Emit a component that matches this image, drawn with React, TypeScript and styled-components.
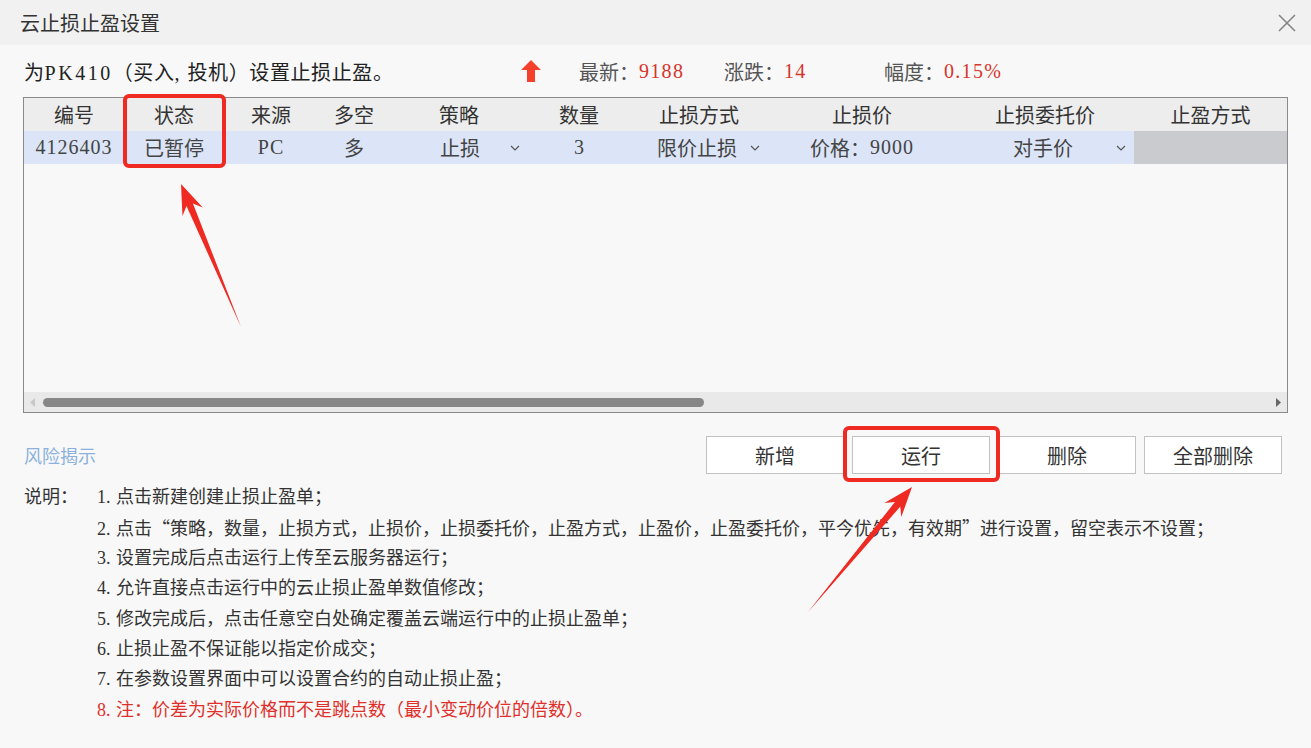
import React from 'react';
import styled, { createGlobalStyle } from 'styled-components';

const GlobalStyle = createGlobalStyle`
  html, body {
    margin: 0;
    padding: 0;
    background: #f8f8f8;
  }
  body {
    font-family: "Liberation Serif", "Noto Sans CJK SC", serif;
    color: #333;
  }
`;

const Window = styled.div`
  position: relative;
  width: 1311px;
  height: 748px;
  overflow: hidden;
  background: #f8f8f8;
`;

const TitleBar = styled.div`
  height: 45px;
  display: flex;
  align-items: center;
  justify-content: space-between;
  padding: 0 12px 0 20px;
  background: #f1f1f1;
  font-size: 20px;
  color: #333;
`;

const CloseButton = styled.div`
  width: 24px;
  height: 24px;
  display: flex;
  align-items: center;
  justify-content: center;
`;

const InfoRow = styled.div`
  height: 52px;
  display: flex;
  align-items: center;
  padding-left: 24px;
  font-size: 20px;
`;

const InfoText = styled.div`
  width: 497px;
  color: #222;
  letter-spacing: 0.6px;
`;

// half-width latin in the original font runs wider than Liberation Serif
const Num = styled.span<{ $sp?: number }>`
  letter-spacing: ${p => p.$sp ?? 1}px;
`;

const Wide = styled.span`
  font-family: "Noto Sans CJK SC", sans-serif;
`;

const UpArrow = styled.div`
  width: 20px;
  height: 24px;
  margin-right: 38px;
  display: flex;
  align-items: center;
`;

const Stat = styled.div<{ $w: number }>`
  width: ${p => p.$w}px;
  display: flex;
  align-items: center;
`;

const StatLabel = styled.span`
  color: #555;
`;

const StatValue = styled.span`
  color: #d6352c;
  letter-spacing: 1.3px;
`;

const TableBox = styled.div`
  margin: 0 23px;
  height: 316px;
  box-sizing: border-box;
  border: 1px solid #8a8a8a;
  display: flex;
  flex-direction: column;
  background: #f8f8f8;
`;

const Row = styled.div<{ $head?: boolean }>`
  display: grid;
  grid-template-columns: 100px 100px 94px 72px 138px 102px 138px 188px 178px 1fr;
  height: 33px;
  background: ${p => (p.$head ? '#ededed' : '#dbe5f7')};
  font-size: 20px;
  color: ${p => (p.$head ? '#333' : '#444')};
`;

const Cell = styled.div<{ $fill?: boolean }>`
  display: flex;
  align-items: center;
  justify-content: center;
  white-space: nowrap;
  background: ${p => (p.$fill ? '#c9cbce' : 'transparent')};
`;

const SelectCell = styled.div<{ $pad: number }>`
  display: flex;
  align-items: center;
  padding-left: ${p => p.$pad}px;
  padding-right: 8px;
  white-space: nowrap;
`;

const Chevron = styled.span`
  margin-left: auto;
  display: flex;
  align-items: center;
`;

const TableBody = styled.div`
  flex: 1;
`;

const HScroll = styled.div`
  height: 20px;
  background: #e9e9e9;
  display: flex;
  align-items: center;
  padding: 0 6px;
  gap: 8px;
`;

const ScrollTrack = styled.div`
  flex: 1;
  height: 9px;
`;

const ScrollThumb = styled.div`
  width: 661px;
  height: 9px;
  border-radius: 5px;
  background: #878787;
`;

const ActionsRow = styled.div`
  margin: 23px 29px 0 24px;
  height: 38px;
  display: flex;
  align-items: center;
  justify-content: space-between;
`;

const RiskLink = styled.span`
  font-size: 18px;
  color: #8ab2dc;
`;

const Buttons = styled.div`
  display: flex;
  gap: 8px;
`;

const Button = styled.button`
  width: 138px;
  height: 38px;
  border: 1px solid #c2c2c2;
  background: #fff;
  font-family: inherit;
  font-size: 20px;
  color: #333;
  padding: 0;
`;

const Notes = styled.div`
  margin-top: 8px;
  padding-left: 24px;
  display: grid;
  grid-template-columns: 73px 1fr;
  grid-auto-rows: 30.4px;
  font-size: 18px;
  line-height: 30.4px;
  color: #333;
`;

const NoteLabel = styled.div`
  grid-row: 1;
`;

const NoteLine = styled.div<{ $warn?: boolean }>`
  grid-column: 2;
  white-space: nowrap;
  color: ${p => (p.$warn ? '#e0302c' : '#333')};
`;

const NoteNo = styled.span`
  display: inline-block;
  width: 19px;
  line-height: 1;
`;

const Overlay = styled.svg`
  position: absolute;
  left: 0;
  top: 0;
  pointer-events: none;
`;

type Pt = [number, number];

// tapered annotation arrow: thin at the tail, barbed head at the tip
const arrowPoints = (tail: Pt, tip: Pt, headLen: number, headW: number, shaftW: number) => {
  const dx = tip[0] - tail[0];
  const dy = tip[1] - tail[1];
  const len = Math.hypot(dx, dy);
  const ux = dx / len;
  const uy = dy / len;
  const nx = -uy;
  const ny = ux;
  const bx = tip[0] - ux * headLen;
  const by = tip[1] - uy * headLen;
  const nb = headLen * 0.25;
  const pts: Pt[] = [
    tail,
    [bx + ux * nb + nx * shaftW / 2, by + uy * nb + ny * shaftW / 2],
    [bx + nx * headW / 2, by + ny * headW / 2],
    tip,
    [bx - nx * headW / 2, by - ny * headW / 2],
    [bx + ux * nb - nx * shaftW / 2, by + uy * nb - ny * shaftW / 2],
  ];
  return pts.map(p => p.join(',')).join(' ');
};

const ChevronIcon = () => (
  <svg width="10" height="6" viewBox="0 0 10 6">
    <path d="M1 1 L5 5 L9 1" fill="none" stroke="#555" strokeWidth="1.2" />
  </svg>
);

const headers = ['编号', '状态', '来源', '多空', '策略', '数量', '止损方式', '止损价', '止损委托价', '止盈方式'];

const App: React.FC = () => {
  const red = '#ee2a22';

  return (
    <Window>
      <GlobalStyle />
      <TitleBar>
        <span>云止损止盈设置</span>
        <CloseButton>
          <svg width="20" height="20" viewBox="0 0 20 20">
            <path d="M2 2 L18 18 M18 2 L2 18" stroke="#858585" strokeWidth="1.6" />
          </svg>
        </CloseButton>
      </TitleBar>

      <InfoRow>
        <InfoText>
          为<Num $sp={2.5}>PK410</Num>（买入<Num $sp={8}>,</Num>投机）设置止损止盈。
        </InfoText>
        <UpArrow>
          <svg width="20" height="22" viewBox="0 0 20 22">
            <path d="M10 0 L20 10 L14 10 L14 22 L6 22 L6 10 L0 10 Z" fill="#f5412b" />
          </svg>
        </UpArrow>
        <Stat $w={145}>
          <StatLabel>最新：</StatLabel>
          <StatValue>9188</StatValue>
        </Stat>
        <Stat $w={160}>
          <StatLabel>涨跌：</StatLabel>
          <StatValue>14</StatValue>
        </Stat>
        <Stat $w={160}>
          <StatLabel>幅度：</StatLabel>
          <StatValue>0.15%</StatValue>
        </Stat>
      </InfoRow>

      <TableBox>
        <Row $head>
          {headers.map(h => (
            <Cell key={h}>{h}</Cell>
          ))}
        </Row>
        <Row>
          <Cell><Num>4126403</Num></Cell>
          <Cell>已暂停</Cell>
          <Cell><Num>PC</Num></Cell>
          <Cell>多</Cell>
          <SelectCell $pad={50}>
            止损
            <Chevron><ChevronIcon /></Chevron>
          </SelectCell>
          <Cell>3</Cell>
          <SelectCell $pad={27}>
            限价止损
            <Chevron><ChevronIcon /></Chevron>
          </SelectCell>
          <Cell>价格：<Num>9000</Num></Cell>
          <SelectCell $pad={57}>
            对手价
            <Chevron><ChevronIcon /></Chevron>
          </SelectCell>
          <Cell $fill />
        </Row>
        <TableBody />
        <HScroll>
          <svg width="5" height="9" viewBox="0 0 5 9">
            <path d="M5 0 L0 4.5 L5 9 Z" fill="#c8c8c8" />
          </svg>
          <ScrollTrack>
            <ScrollThumb />
          </ScrollTrack>
          <svg width="5" height="9" viewBox="0 0 5 9">
            <path d="M0 0 L5 4.5 L0 9 Z" fill="#666" />
          </svg>
        </HScroll>
      </TableBox>

      <ActionsRow>
        <RiskLink>风险揭示</RiskLink>
        <Buttons>
          <Button>新增</Button>
          <Button>运行</Button>
          <Button>删除</Button>
          <Button>全部删除</Button>
        </Buttons>
      </ActionsRow>

      <Notes>
        <NoteLabel>说明：</NoteLabel>
        <NoteLine><NoteNo>1.</NoteNo>点击新建创建止损止盈单；</NoteLine>
        <NoteLine>
          <NoteNo>2.</NoteNo>点击<Wide>“</Wide>策略，数量，止损方式，止损价，止损委托价，止盈方式，止盈价，止盈委托价，平今优先，有效期<Wide>”</Wide>进行设置，留空表示不设置；
        </NoteLine>
        <NoteLine><NoteNo>3.</NoteNo>设置完成后点击运行上传至云服务器运行；</NoteLine>
        <NoteLine><NoteNo>4.</NoteNo>允许直接点击运行中的云止损止盈单数值修改；</NoteLine>
        <NoteLine><NoteNo>5.</NoteNo>修改完成后，点击任意空白处确定覆盖云端运行中的止损止盈单；</NoteLine>
        <NoteLine><NoteNo>6.</NoteNo>止损止盈不保证能以指定价成交；</NoteLine>
        <NoteLine><NoteNo>7.</NoteNo>在参数设置界面中可以设置合约的自动止损止盈；</NoteLine>
        <NoteLine $warn><NoteNo>8.</NoteNo>注：价差为实际价格而不是跳点数（最小变动价位的倍数）。</NoteLine>
      </Notes>

      <Overlay width="1311" height="748" viewBox="0 0 1311 748">
        <rect x="125" y="96" width="99" height="70" rx="4" fill="none" stroke={red} strokeWidth="4" />
        <rect x="845" y="428" width="153" height="52" rx="4" fill="none" stroke={red} strokeWidth="4" />
        <polygon points={arrowPoints([241, 327], [181, 184], 30, 22, 7)} fill={red} />
        <polygon points={arrowPoints([808, 612], [912, 487], 30, 22, 7)} fill={red} />
      </Overlay>
    </Window>
  );
};

export default App;
